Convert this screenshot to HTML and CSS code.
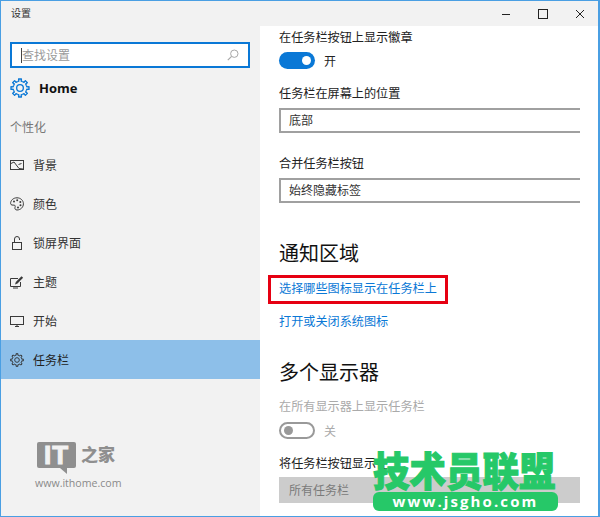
FILE: index.html
```html
<!DOCTYPE html>
<html lang="zh-CN">
<head>
<meta charset="utf-8">
<title>设置</title>
<link rel="stylesheet" href="styles.css">
</head>
<body>
<svg class="defs" width="0" height="0" aria-hidden="true">
  <symbol id="gear" viewBox="0 0 24 24">
    <g fill="none" stroke="currentColor" stroke-width="1.6" stroke-linejoin="round">
      <path d="M8.82 4.33 10.6 3.8 10.3 1.2H13.7L13.4 3.8 15.18 4.33"/>
      <path transform="rotate(45 12 12)" d="M8.82 4.33 10.6 3.8 10.3 1.2H13.7L13.4 3.8 15.18 4.33"/>
      <path transform="rotate(90 12 12)" d="M8.82 4.33 10.6 3.8 10.3 1.2H13.7L13.4 3.8 15.18 4.33"/>
      <path transform="rotate(135 12 12)" d="M8.82 4.33 10.6 3.8 10.3 1.2H13.7L13.4 3.8 15.18 4.33"/>
      <path transform="rotate(180 12 12)" d="M8.82 4.33 10.6 3.8 10.3 1.2H13.7L13.4 3.8 15.18 4.33"/>
      <path transform="rotate(225 12 12)" d="M8.82 4.33 10.6 3.8 10.3 1.2H13.7L13.4 3.8 15.18 4.33"/>
      <path transform="rotate(270 12 12)" d="M8.82 4.33 10.6 3.8 10.3 1.2H13.7L13.4 3.8 15.18 4.33"/>
      <path transform="rotate(315 12 12)" d="M8.82 4.33 10.6 3.8 10.3 1.2H13.7L13.4 3.8 15.18 4.33"/>
      <circle cx="12" cy="12" r="4"/>
    </g>
  </symbol>
</svg>
<div class="window">
  <aside class="sidebar">
    <div class="app-title">设置</div>
    <div class="search">
      <span class="caret"></span>
      <span class="placeholder">查找设置</span>
      <svg class="search-icon" viewBox="0 0 12 12" width="12" height="12"><circle cx="7.3" cy="4.7" r="3.7" fill="none" stroke="#a8a8a8" stroke-width="1"/><path d="M4.6 7.4 .8 11.2" stroke="#a8a8a8" stroke-width="1.2" fill="none"/></svg>
    </div>
    <div class="home">
      <svg class="home-icon" width="20" height="20"><use href="#gear"/></svg>
      <span class="home-text">Home</span>
    </div>
    <div class="section">个性化</div>
    <nav class="nav">
      <div class="item">
        <svg class="ico" viewBox="0 0 14 14" width="14" height="14"><g fill="none" stroke="#3a3a3a"><rect x=".5" y="2.5" width="13" height="9"/><path d="M1 5.5 4 4l5 6.5 4 .5M8.5 6.5l3-1"/></g></svg>
        <span>背景</span>
      </div>
      <div class="item">
        <svg class="ico" viewBox="0 0 14 14" width="14" height="14"><path d="M7 .8C3.2.8.6 3.4.6 6.4c0 2 2.4 1.7 3.4 1.7 1.4 0 1.4 1.3 1 2.3-.4 1.2.2 2.6 2 2.6 3.6 0 6.4-2.8 6.4-6.2C13.4 3.4 10.6.8 7 .8Z" fill="none" stroke="#3a3a3a"/><g fill="#3a3a3a"><circle cx="4" cy="4.6" r="1"/><circle cx="7.2" cy="3.3" r="1"/><circle cx="10.3" cy="5" r="1"/><circle cx="10.5" cy="8.3" r="1"/><circle cx="8" cy="10.5" r="1"/></g></svg>
        <span>颜色</span>
      </div>
      <div class="item">
        <svg class="ico" viewBox="0 0 14 14" width="14" height="14"><g fill="none" stroke="#3a3a3a"><rect x="2.5" y="6.5" width="9" height="7"/><path d="M4.5 6.5V3a2.5 2.5 0 0 1 5 0v1"/></g></svg>
        <span>锁屏界面</span>
      </div>
      <div class="item">
        <svg class="ico" viewBox="0 0 14 14" width="14" height="14"><g fill="none" stroke="#3a3a3a"><path d="M8 3.5H.5v8h10V7"/><path d="M3 13h5"/></g><path d="M5 9.5 5.8 7 11.5 1.200l1.600 1.500-5.600 5.900Z" fill="#3a3a3a"/></svg>
        <span>主题</span>
      </div>
      <div class="item">
        <svg class="ico" viewBox="0 0 14 14" width="14" height="14"><g fill="none" stroke="#3a3a3a"><rect x=".5" y="2.5" width="13" height="8"/><path d="M7 10.500V13M5 12.500h4"/></g></svg>
        <span>开始</span>
      </div>
      <div class="item item-active">
        <svg class="ico ico-gear" width="14" height="14"><use href="#gear"/></svg>
        <span>任务栏</span>
      </div>
    </nav>
    <div class="logo">
      <div class="logo-mark">
        <div class="bubble">IT</div>
        <div class="logo-cn">之家</div>
      </div>
      <div class="logo-url">www.ithome.com</div>
    </div>
  </aside>
  <main class="main">
    <div class="titlebar">
      <svg class="tb" viewBox="0 0 10 10" width="10" height="10"><path d="M1 5.5h8" stroke="#222" fill="none"/></svg>
      <svg class="tb" viewBox="0 0 10 10" width="10" height="10"><rect x=".5" y=".5" width="9" height="9" stroke="#222" fill="none"/></svg>
      <svg class="tb" viewBox="0 0 10 10" width="10" height="10"><path d="M1 1l8 8M9 1 1 9" stroke="#222" fill="none"/></svg>
    </div>
    <div class="content">
      <div class="label first">在任务栏按钮上显示徽章</div>
      <div class="toggle-row">
        <span class="toggle on"><span class="knob"></span></span>
        <span class="toggle-text">开</span>
      </div>
      <div class="label label-2">任务栏在屏幕上的位置</div>
      <div class="select">底部</div>
      <div class="label label-3">合并任务栏按钮</div>
      <div class="select">始终隐藏标签</div>
      <h2 class="heading h-notify">通知区域</h2>
      <div class="link-box"><a class="link">选择哪些图标显示在任务栏上</a></div>
      <a class="link link-2">打开或关闭系统图标</a>
      <h2 class="heading h-multi">多个显示器</h2>
      <div class="label label-off">在所有显示器上显示任务栏</div>
      <div class="toggle-row toggle-row-off">
        <span class="toggle off"><span class="knob"></span></span>
        <span class="toggle-text muted">关</span>
      </div>
      <div class="label label-4">将任务栏按钮显示在</div>
      <div class="select select-off">所有任务栏</div>
    </div>
  </main>
  <div class="watermark">
    <div class="wm-title">技术员联盟</div>
    <div class="wm-url">www.jsgho.com</div>
  </div>
</div>
</body>
</html>
```

FILE: styles.css
```css
* { box-sizing: border-box; }
html, body { margin: 0; padding: 0; background: #fff; }
body { font-family: "Noto Sans CJK SC", "Liberation Sans", sans-serif; font-size: 12px; color: #222; }
.defs { position: absolute; }

.window {
  position: relative;
  display: flex;
  width: 600px;
  height: 517px;
  overflow: hidden;
  border: 1px solid #4a9fe3;
  border-right-width: 2px;
}

.sidebar {
  width: 259px;
  flex: none;
  display: flex;
  flex-direction: column;
  background: #f2f2f2;
}
.app-title { height: 25px; padding-left: 10px; line-height: 23px; font-size: 10px; color: #333; }
.search {
  display: flex;
  align-items: center;
  width: 240px;
  height: 26px;
  margin: 16px 0 0 9px;
  padding: 0 9px 0 9px;
  border: 2px solid #0a78d6;
  background: #fff;
}
.caret { width: 1px; height: 15px; background: #444; flex: none; }
.placeholder { flex: 1; padding-bottom: 2px; color: #9a9a9a; font-size: 12px; }
.search-icon { flex: none; }
.home { display: flex; align-items: center; height: 20px; margin: 10px 0 0 9px; }
.home-icon { color: #0a78d6; flex: none; }
.home-text { margin-left: 9px; font: 700 13px "Open Sans", "Liberation Sans", sans-serif; color: #111; }
.section { margin: 20px 0 0 9px; height: 18px; line-height: 18px; color: #777; }
.nav { margin-top: 9px; }
.item { display: flex; align-items: center; height: 39px; padding-left: 9px; color: #333; }
.ico { flex: none; margin-right: 9px; }
.item-active { background: #8dbfe9; color: #222; }
.ico-gear { color: #333; }

.logo { margin: auto 0 0 34px; padding-bottom: 26px; }
.logo-mark { display: flex; align-items: flex-start; padding-left: 2px; }
.bubble {
  position: relative;
  width: 39px;
  height: 26px;
  border-radius: 2px;
  background: #8f8f8f;
  color: #f2f2f2;
  font: 900 26px/26px "Liberation Sans", sans-serif;
  letter-spacing: 1px;
  -webkit-text-stroke: 1px #f2f2f2;
  text-align: center;
}
.bubble::after {
  content: "";
  position: absolute;
  left: 23px;
  top: 26px;
  border-style: solid;
  border-width: 0 0 6px 7px;
  border-color: transparent transparent transparent #8f8f8f;
  transform: scaleX(-1);
}
.logo-cn { margin: -1px 0 0 5px; color: #8f8f8f; font-size: 17px; font-weight: 900; line-height: 26px; font-family: "Noto Sans CJK SC", sans-serif; }
.logo-url { margin-top: 8px; font: 10.6px "Open Sans", "Liberation Sans", sans-serif; color: #8a8a8a; }

.main { flex: 1; min-width: 0; display: flex; flex-direction: column; }
.titlebar {
  display: flex;
  justify-content: flex-end;
  align-items: center;
  gap: 27px;
  height: 25px;
  padding-right: 13px;
  background: #f2f2f2;
}
.tb { flex: none; }
.content { padding: 0 18px 0 19px; }
.label { height: 18px; line-height: 18px; color: #222; font-size: 12.15px; }
.first { margin-top: 2px; }
.toggle-row { display: flex; align-items: center; height: 17px; margin-top: 6px; }
.toggle { display: flex; align-items: center; width: 36px; height: 17px; padding: 0 4px; border-radius: 9px; }
.toggle.on { background: #0a78d6; justify-content: flex-end; }
.toggle.off { border: 2px solid #999; background: #fff; padding: 0 3px; }
.knob { width: 9px; height: 9px; border-radius: 50%; background: #fff; }
.off .knob { background: #999; }
.toggle-text { margin-left: 9px; color: #222; }
.muted { color: #aaa; }
.label-2 { margin-top: 15px; }
.select {
  height: 25px;
  margin-top: 6px;
  padding-left: 8px;
  line-height: 19px;
  border: 2px solid #a0a0a0;
  border-right: 0;
  color: #333;
}
.label-3 { margin-top: 21px; }
.heading { margin: 0; font-size: 20px; font-weight: 400; line-height: 28px; color: #111; }
.h-notify { margin-top: 36px; }
.link { color: #0a78d6; font-size: 12.15px; }
.link-box {
  width: 180px;
  height: 29px;
  margin: 8px 0 0 -11px;
  padding-left: 8px;
  line-height: 20px;
  border: 3px solid #e60012;
}
.link-2 { display: block; margin-top: 8px; height: 18px; line-height: 18px; }
.h-multi { margin-top: 28px; }
.label-off { margin-top: 11px; color: #aaa; }
.toggle-row-off { margin-top: 7px; }
.label-4 { margin-top: 15px; }
.select-off {
  height: 26px;
  margin-top: 5px;
  padding-left: 10px;
  line-height: 26px;
  border: 0;
  background: #cccccc;
  color: #7a7a7a;
}

.watermark { position: absolute; left: 372px; top: 447px; width: 185px; }
.wm-title {
  height: 44px;
  font-size: 36.5px;
  font-weight: 900;
  line-height: 44px;
  white-space: nowrap;
  color: #26c868;
  -webkit-text-stroke: 1px #26c868;
  transform: scaleY(1.08);
}
.wm-url {
  height: 19px;
  border-radius: 6px;
  background: #26c868;
  color: #fff;
  font: 700 15px/18px "Open Sans", "Liberation Sans", sans-serif;
  letter-spacing: 2.1px;
  text-align: center;
}
```
